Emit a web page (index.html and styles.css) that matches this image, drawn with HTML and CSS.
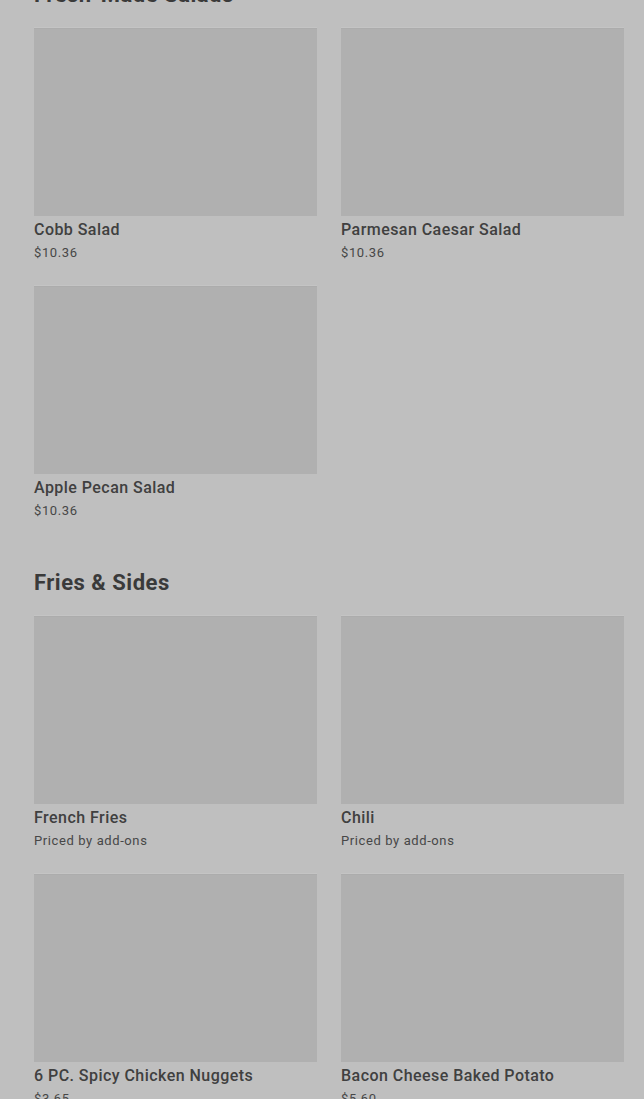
FILE: index.html
```html
<!DOCTYPE html>
<html lang="en">
<head>
  <meta charset="UTF-8">
  <meta name="viewport" content="width=device-width, initial-scale=1.0">
  <title>Menu</title>
  <link rel="stylesheet" href="styles.css">
</head>
<body>
<main class="menu">
  <section class="menu-section">
    <h2>Fresh-Made Salads</h2>
    <div class="item-grid">
      <div class="item">
        <div class="item-img"></div>
        <h3>Cobb Salad</h3>
        <p>$10.36</p>
      </div>
      <div class="item">
        <div class="item-img"></div>
        <h3>Parmesan Caesar Salad</h3>
        <p>$10.36</p>
      </div>
      <div class="item">
        <div class="item-img"></div>
        <h3>Apple Pecan Salad</h3>
        <p>$10.36</p>
      </div>
    </div>
  </section>
  <section class="menu-section">
    <h2>Fries &amp; Sides</h2>
    <div class="item-grid">
      <div class="item">
        <div class="item-img"></div>
        <h3>French Fries</h3>
        <p>Priced by add-ons</p>
      </div>
      <div class="item">
        <div class="item-img"></div>
        <h3>Chili</h3>
        <p>Priced by add-ons</p>
      </div>
      <div class="item">
        <div class="item-img"></div>
        <h3>6 PC. Spicy Chicken Nuggets</h3>
        <p>$3.65</p>
      </div>
      <div class="item">
        <div class="item-img"></div>
        <h3>Bacon Cheese Baked Potato</h3>
        <p>$5.60</p>
      </div>
    </div>
  </section>
</main>
</body>
</html>
```
FILE: styles.css
```css
body {
  margin: 0;
  padding: 0;
  background-color: #bfbfbf;
  font-family: Roboto, "Liberation Sans", sans-serif;
  color: #3c3c3c;
  overflow: hidden;
}
.menu {
  margin-top: -19px;
  padding: 0 20px 0 34px;
}
.menu-section {
  margin-bottom: 49px;
}
.menu-section h2 {
  font-size: 22px;
  line-height: 28px;
  font-weight: 700;
  margin: 0 0 19px;
  color: #3a3a3a;
  letter-spacing: 0.5px;
}
.item-grid {
  display: grid;
  grid-template-columns: 1fr 1fr;
  column-gap: 24px;
  row-gap: 24px;
}
.item-img {
  height: 188px;
  background-color: #b0b0b0;
  box-shadow: inset 0 1px 0 #acacac, 0 -1px 0 #c4c4c4;
}
.item h3 {
  margin: 4px 0 0;
  font-size: 16px;
  line-height: 20px;
  font-weight: 500;
  color: #404040;
  letter-spacing: 0.45px;
}
.item p {
  margin: 4px 0 0;
  font-size: 13px;
  line-height: 18px;
  color: #474747;
  letter-spacing: 0.6px;
}
```
